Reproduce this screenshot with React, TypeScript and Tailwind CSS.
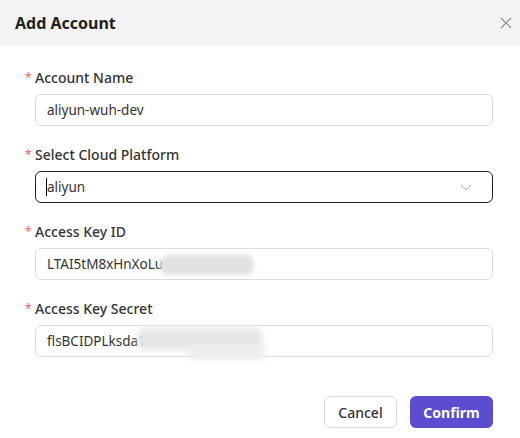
import React from 'react';

const Field: React.FC<{ label: string; children: React.ReactNode }> = ({ label, children }) => (
  <div className="mb-[18px]">
    <div className="flex h-[20px] items-center text-[14px] font-medium text-[#333]">
      <span className="mt-[1px] w-[10px] text-[12px] leading-none text-[#f56c6c]">*</span>
      <span>{label}</span>
    </div>
    <div className="ml-[10px] mt-[7px]">{children}</div>
  </div>
);

const App: React.FC = () => {
  return (
    <div className="h-[438px] w-[520px] bg-white" style={{ fontFamily: '"Noto Sans", "Open Sans", sans-serif' }}>
      <div className="flex h-[46px] items-center justify-between bg-[#f3f3f3] pl-[15px] pr-[7px]">
        <h1 className="text-[16px] font-bold text-[#1f1f1f]">Add Account</h1>
        <svg width="14" height="14" viewBox="0 0 14 14" className="text-[#8a8a8a]">
          <path d="M2 2 L12 12 M12 2 L2 12" stroke="currentColor" strokeWidth="1.1" />
        </svg>
      </div>

      <div className="pl-[25px] pr-[27px] pt-[21px]">
        <Field label="Account Name">
          <div className="flex h-[32px] items-center rounded-[6px] border border-[#dcdcdc] px-[11px] text-[13.5px] text-[#333]">
            aliyun-wuh-dev
          </div>
        </Field>

        <Field label="Select Cloud Platform">
          <div className="flex h-[32px] items-center justify-between rounded-[6px] border border-[#222] px-[11px] text-[13.5px] text-[#333]">
            <span className="relative">
              <span className="absolute -left-[1px] top-[1px] h-[18px] w-px bg-black" />
              aliyun
            </span>
            <svg width="14" height="14" viewBox="0 0 14 14" className="mr-[8px] text-[#b8b8b8]">
              <path d="M2 5 L7 10 L12 5" fill="none" stroke="currentColor" strokeWidth="1" />
            </svg>
          </div>
        </Field>

        <Field label="Access Key ID">
          <div className="relative flex h-[32px] items-center rounded-[6px] border border-[#dcdcdc] px-[11px] text-[13.5px] text-[#333]">
            LTAI5tM8xHnXoLu
            <div className="absolute left-[124px] top-[6px] h-[20px] w-[94px] rounded-[8px] bg-[#e2e2e2] blur-[2px]" />
          </div>
        </Field>

        <Field label="Access Key Secret">
          <div className="relative flex h-[32px] items-center rounded-[6px] border border-[#dcdcdc] px-[11px] text-[13.5px] text-[#333]">
            flsBCIDPLksda1
            <div className="absolute left-[101px] top-[2px] h-[22px] w-[125px] rounded-[8px] bg-[#e6e6e6] blur-[3px]" />
            <div className="absolute left-[150px] top-[18px] h-[16px] w-[80px] rounded-[8px] bg-[#eeeeee] blur-[3px]" />
          </div>
        </Field>

        <div className="mt-[39px] flex justify-end gap-[13px]">
          <button className="h-[32px] w-[73px] rounded-[6px] border border-[#dcdcdc] bg-white text-[14px] font-medium text-[#333]">
            Cancel
          </button>
          <button className="h-[32px] w-[83px] rounded-[6px] bg-[#5b4cd0] text-[14px] font-bold text-white">
            Confirm
          </button>
        </div>
      </div>
    </div>
  );
};

export default App;
